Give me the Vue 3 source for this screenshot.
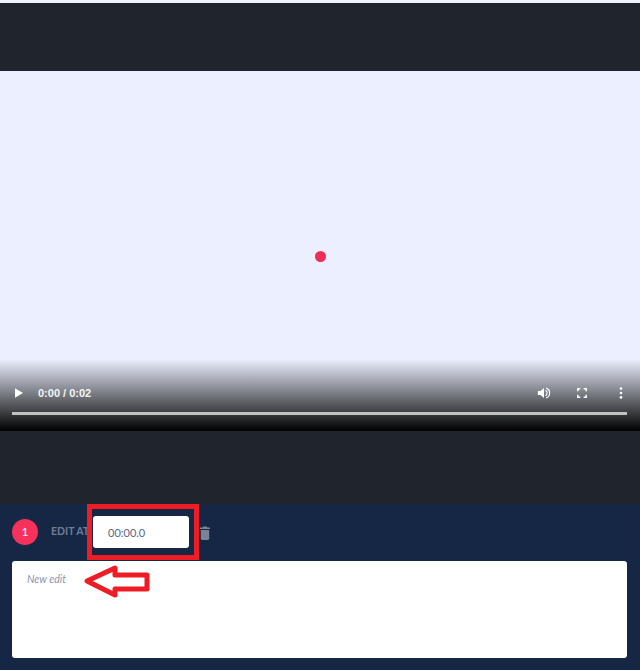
<script setup>
const timeValue = '00:00.0'
</script>

<template>
  <div class="page">
    <div class="band band-top"></div>
    <div class="video">
      <span class="dot"></span>
      <div class="controls">
        <div class="control-row">
          <svg class="play" viewBox="0 0 12 14" width="12" height="14"><path d="M2 2.200v9.600L10 7z" fill="#fff" /></svg>
          <span class="time">0:00 / 0:02</span>
          <span class="spacer"></span>
          <svg class="ctl vol" viewBox="0 0 16 16" width="14" height="14">
            <path d="M1 5.600h3L8 2.200v11.600L4 10.400H1z" fill="#fff" />
            <path d="M9.600 4.800a3.600 3.600 0 0 1 0 6.400M10.600 2.400a6 6 0 0 1 0 11.200" fill="none" stroke="#fff" stroke-width="1.300" />
          </svg>
          <svg class="ctl full" viewBox="0 0 12 12" width="10" height="10">
            <path d="M1 4V1h3M8 1h3v3M11 8v3H8M4 11H1V8" fill="none" stroke="#fff" stroke-width="1.800" />
          </svg>
          <svg class="ctl more" viewBox="0 0 4 12" width="4" height="12">
            <circle cx="2" cy="1.600" r="1.300" fill="#fff" />
            <circle cx="2" cy="6" r="1.300" fill="#fff" />
            <circle cx="2" cy="10.400" r="1.300" fill="#fff" />
          </svg>
        </div>
        <div class="track"></div>
      </div>
    </div>
    <div class="band band-bottom"></div>
    <section class="editor">
      <div class="edit-head">
        <span class="badge">1</span>
        <span class="label">EDIT AT</span>
        <div class="time-wrap">
          <input class="time-input" :value="timeValue" />
          <span class="frame"></span>
        </div>
        <svg class="trash" viewBox="0 0 12 14" width="12" height="14">
          <path d="M4.300 0.600h3.400l.6.9H11v1.600H1V1.500h2.700zM1.800 4h8.400v8.600c0 .8-.6 1.400-1.400 1.400H3.200c-.8 0-1.400-.6-1.400-1.400z" fill="#7b8497" />
        </svg>
      </div>
      <div class="note">
        <span class="placeholder">New edit</span>
        <svg class="arrow" viewBox="0 0 70 34" width="70" height="34">
          <path d="M6 16 L34 3 L34 10 L66 10 L66 24 L34 24 L34 30 Z" fill="none" stroke="#ee1c25" stroke-width="5" stroke-linejoin="round" />
        </svg>
      </div>
    </section>
  </div>
</template>

<style scoped>
.page {
  width: 640px;
  padding-top: 3px;
  background: #f0f2fa;
  font-family: "Lato", "Liberation Sans", sans-serif;
}
.band {
  background: #1f242d;
}
.band-top {
  height: 68px;
}
.band-bottom {
  height: 73px;
}
.video {
  position: relative;
  height: 360px;
  background: #ebefff;
  display: flex;
  align-items: center;
  justify-content: center;
}
.dot {
  width: 11px;
  height: 11px;
  margin-top: 10px;
  border-radius: 50%;
  background: #f02d56;
}
.controls {
  position: absolute;
  left: 0;
  right: 0;
  bottom: 0;
  height: 72px;
  padding: 0 13px 0 12px;
  box-sizing: border-box;
  background: linear-gradient(to bottom, rgba(0, 0, 0, 0), rgba(0, 0, 0, 0.45) 45%, rgba(0, 0, 0, 1));
  display: flex;
  flex-direction: column;
  justify-content: flex-end;
}
.control-row {
  display: flex;
  align-items: center;
  height: 16px;
  margin-bottom: 11px;
}
.play {
  margin-left: 1px;
}
.time {
  margin-left: 13px;
  font-family: "Liberation Sans", sans-serif;
  font-weight: 700;
  font-size: 11px;
  color: #f4f4f4;
}
.spacer {
  flex: 1;
}
.vol {
  margin-right: 26px;
}
.full {
  margin-right: 32px;
}
.more {
  margin-right: 4px;
}
.track {
  height: 3px;
  background: #c2c2c2;
  margin-bottom: 16px;
}
.editor {
  background: #162745;
  height: 166px;
  padding: 12px 13px 0 12px;
  box-sizing: border-box;
}
.edit-head {
  display: flex;
  align-items: center;
  height: 32px;
  margin-bottom: 13px;
}
.badge {
  width: 26px;
  height: 26px;
  padding-bottom: 2px;
  box-sizing: border-box;
  border-radius: 50%;
  background: #f5315c;
  color: #fff;
  font-size: 12px;
  display: flex;
  align-items: center;
  justify-content: center;
}
.label {
  margin-left: 13px;
  font-size: 10.500px;
  font-weight: 700;
  color: #6f7c95;
  align-self: flex-start;
  line-height: 30px;
  width: 42px;
  white-space: nowrap;
}
.time-wrap {
  position: relative;
  width: 96px;
  height: 32px;
}
.frame {
  position: absolute;
  left: -6px;
  right: -10px;
  top: -12px;
  bottom: -12px;
  border: 5px solid #ee1c25;
  pointer-events: none;
}
.time-input {
  display: block;
  width: 96px;
  height: 32px;
  box-sizing: border-box;
  border: 0;
  border-radius: 3px;
  background: #fff;
  padding: 0 0 0 15px;
  font-family: "Lato", sans-serif;
  font-size: 11px;
  color: #5a6688;
}
.trash {
  margin-left: 10px;
  margin-top: 2px;
}
.note {
  position: relative;
  height: 97px;
  background: #fff;
  border-radius: 3px;
  padding: 6px 15px;
  box-sizing: border-box;
}
.placeholder {
  font-size: 10.500px;
  font-style: italic;
  color: #8a94b0;
}
.arrow {
  position: absolute;
  left: 69px;
  top: 4px;
}
</style>
